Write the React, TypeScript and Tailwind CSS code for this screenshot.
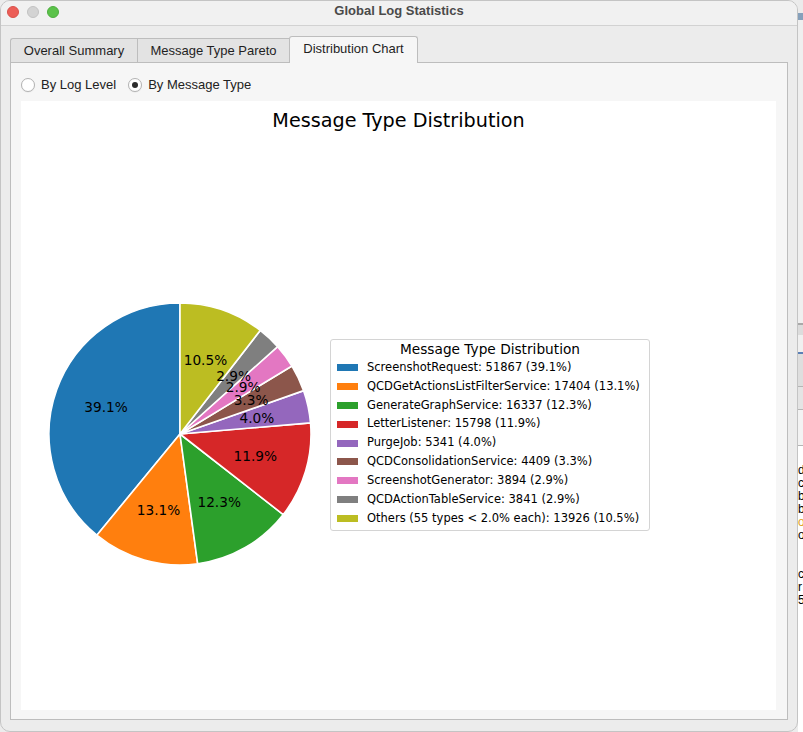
import React from 'react';

type Slice = { name: string; value: number; color: string };

const slices: Slice[] = [
  { name: 'ScreenshotRequest', value: 51867, color: '#1f77b4' },
  { name: 'QCDGetActionsListFilterService', value: 17404, color: '#ff7f0e' },
  { name: 'GenerateGraphService', value: 16337, color: '#2ca02c' },
  { name: 'LetterListener', value: 15798, color: '#d62728' },
  { name: 'PurgeJob', value: 5341, color: '#9467bd' },
  { name: 'QCDConsolidationService', value: 4409, color: '#8c564b' },
  { name: 'ScreenshotGenerator', value: 3894, color: '#e377c2' },
  { name: 'QCDActionTableService', value: 3841, color: '#7f7f7f' },
  { name: 'Others (55 types < 2.0% each)', value: 13926, color: '#bcbd22' },
];

const total = slices.reduce((sum, s) => sum + s.value, 0);
const pct = (v: number) => ((v / total) * 100).toFixed(1) + '%';

function PieChart() {
  const size = 266;
  const cx = 133;
  const cy = 133;
  const r = 131;

  const pt = (deg: number, rad: number) => {
    const a = (deg * Math.PI) / 180;
    return [cx + rad * Math.cos(a), cy - rad * Math.sin(a)];
  };

  // matplotlib style: start at 90deg, counter clockwise
  let angle = 90;
  const wedges = slices.map((s) => {
    const sweep = (s.value / total) * 360;
    const start = angle;
    const end = angle + sweep;
    angle = end;
    const [x1, y1] = pt(start, r);
    const [x2, y2] = pt(end, r);
    const large = sweep > 180 ? 1 : 0;
    const [lx, ly] = pt(start + sweep / 2, r * 0.6);
    return {
      ...s,
      d: `M${cx},${cy} L${x1},${y1} A${r},${r} 0 ${large} 0 ${x2},${y2} Z`,
      lx,
      ly,
    };
  });

  return (
    <svg width={size} height={size} viewBox={`0 0 ${size} ${size}`}>
      {wedges.map((w) => (
        <path key={w.name} d={w.d} fill={w.color} stroke="#ffffff" strokeWidth={1.6} strokeLinejoin="round" />
      ))}
      {wedges.map((w) => (
        <text
          key={w.name + '-label'}
          x={w.lx}
          y={w.ly}
          textAnchor="middle"
          dominantBaseline="central"
          fontFamily="'DejaVu Sans', sans-serif"
          fontSize="13.7"
          fill="#000000"
        >
          {pct(w.value)}
        </text>
      ))}
    </svg>
  );
}

function Legend() {
  return (
    <div className="w-[320px] mt-[38px] bg-white/80 border border-[#d4d4d4] rounded-[3px] pt-[1px] pb-[2px] font-['DejaVu_Sans',sans-serif] text-black">
      <div className="text-center text-[13.7px] leading-[17px]">Message Type Distribution</div>
      {slices.map((s) => (
        <div key={s.name} className="flex items-center h-[18.9px] pl-[6px]">
          <span className="w-[21px] h-[7px] shrink-0" style={{ backgroundColor: s.color }} />
          <span className="ml-[9px] text-[11.5px] whitespace-nowrap">
            {s.name}: {s.value} ({pct(s.value)})
          </span>
        </div>
      ))}
    </div>
  );
}

function Radio({ label, checked }: { label: string; checked?: boolean }) {
  return (
    <div className="flex items-center h-[14px]">
      <span className="w-[14px] h-[14px] rounded-full border border-[#b3b3b3] bg-white flex items-center justify-center shadow-[0_0.5px_1px_rgba(0,0,0,0.08)]">
        {checked && <span className="w-[6px] h-[6px] rounded-full bg-[#2b2b2b]" />}
      </span>
      <span className="ml-[6px] text-[13px] leading-[14px] text-[#222]">{label}</span>
    </div>
  );
}

function BackgroundStrip() {
  return (
    <div className="w-[5px] h-full flex flex-col overflow-hidden bg-[#ededed]">
      <div className="h-[13px] bg-[#ebebeb]" />
      <div className="h-[7px] bg-[#86a0bb]" />
      <div className="h-[303px] bg-[#efefef]" />
      <div className="h-[2px] bg-[#a9a9a9]" />
      <div className="h-[10px] bg-[#dcdcdc]" />
      <div className="h-[17px] bg-[#f0f0f0]" />
      <div className="h-[2px] bg-[#5b80b6]" />
      <div className="h-[32px] bg-[#dedede]" />
      <div className="h-px bg-[#b5b5b5]" />
      <div className="h-[22px] bg-[#e4e4e4]" />
      <div className="h-px bg-[#b5b5b5]" />
      <div className="h-[35px] bg-[#f3f3f3]" />
      <div className="h-px bg-[#b5b5b5]" />
      <div className="flex-1 bg-white pt-[18px] font-['Liberation_Sans',sans-serif] text-[12px] leading-[13px] text-black">
        <div>d</div>
        <div>c</div>
        <div>b</div>
        <div>b</div>
        <div className="text-[#e0a020]">o</div>
        <div>o</div>
        <div className="h-[26px]" />
        <div>c</div>
        <div>r</div>
        <div>5</div>
      </div>
    </div>
  );
}

export default function App() {
  return (
    <div className="w-[803px] h-[732px] flex bg-[#ececec] font-['Liberation_Sans',Arial,sans-serif] overflow-hidden">
      <div className="w-[798px] h-full flex flex-col bg-[#ececec] border border-[#c4c4c4] rounded-[10px] overflow-hidden">
        {/* title bar */}
        <div className="h-[25px] shrink-0 grid grid-cols-[1fr_auto_1fr] items-start bg-[#f1f1f1] border-b border-[#d2d2d2]">
          <div className="flex gap-[8px] pl-[6px] pt-[5px]">
            <span className="w-[12px] h-[12px] rounded-full bg-[#ec5e57] border border-[#d8524b]" />
            <span className="w-[12px] h-[12px] rounded-full bg-[#d3d3d3] border border-[#c2c2c2]" />
            <span className="w-[12px] h-[12px] rounded-full bg-[#5bc24a] border border-[#4ead3f]" />
          </div>
          <div className="pt-[1px] text-[13px] leading-[18px] font-bold text-[#4a4a4a]">Global Log Statistics</div>
          <div />
        </div>

        {/* tabs */}
        <div className="flex items-end pl-[9px] pt-[10px] text-[13px] text-[#1f1f1f]">
          <div className="w-[127px] h-[24px] flex items-center justify-center bg-[#e3e3e3] border-l border-t border-[#bdbdbd] rounded-tl-[3px]">
            Overall Summary
          </div>
          <div className="w-[152px] h-[24px] flex items-center justify-center bg-[#e3e3e3] border-l border-t border-[#bdbdbd]">
            Message Type Pareto
          </div>
          <div className="relative z-10 -mb-px w-[129px] h-[27px] flex items-center justify-center pb-[2px] bg-[#f6f6f6] border-l border-t border-r border-[#bdbdbd] rounded-t-[3px]">
            Distribution Chart
          </div>
        </div>

        {/* pane */}
        <div className="mx-[9px] h-[658px] bg-[#f6f6f6] border border-[#bdbdbd] flex flex-col px-[10px]">
          <div className="flex items-center gap-[12px] pt-[15px]">
            <Radio label="By Log Level" />
            <Radio label="By Message Type" checked />
          </div>

          <div className="mt-[9px] w-[755px] h-[609px] bg-white flex flex-col">
            <div className="mt-[8px] text-center text-[19.2px] leading-[24px] text-black font-['DejaVu_Sans',sans-serif]">
              Message Type Distribution
            </div>
            <div className="flex items-start mt-[168px] pl-[26px]">
              <PieChart />
              <div className="ml-[17px]">
                <Legend />
              </div>
            </div>
          </div>
        </div>
      </div>
      <BackgroundStrip />
    </div>
  );
}
